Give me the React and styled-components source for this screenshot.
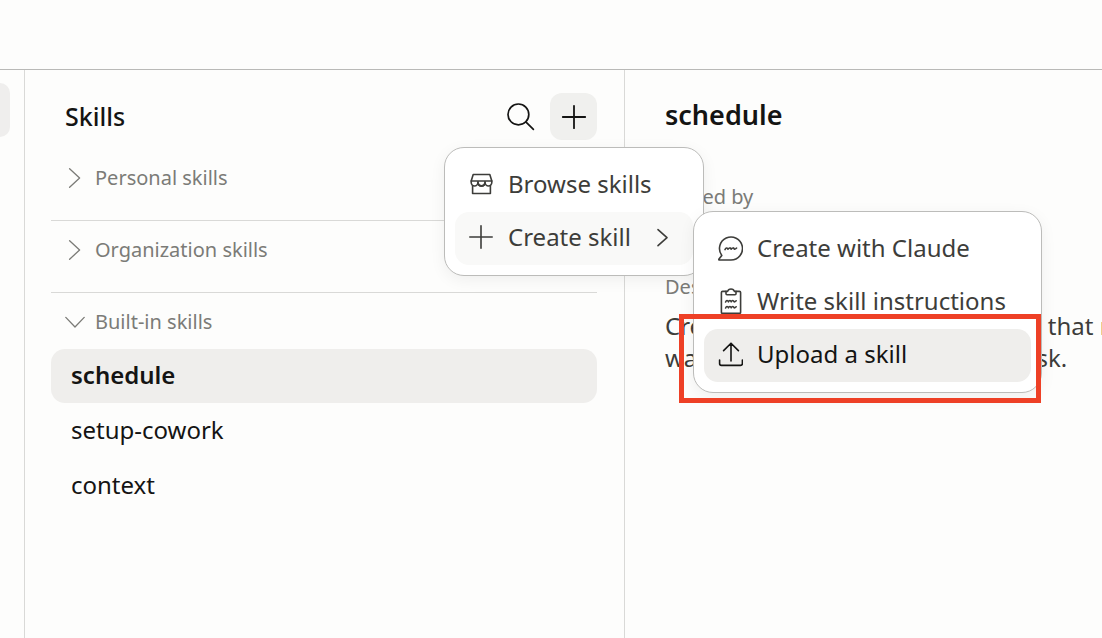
import React from 'react';
import styled, {createGlobalStyle, css} from 'styled-components';

const GlobalStyle = createGlobalStyle`
  * {
    box-sizing: border-box;
  }
  body {
    margin: 0;
    background: #fdfdfc;
    color: #141413;
    font-family: "Noto Sans", "Liberation Sans", sans-serif;
    font-size: 24px;
  }
  button {
    margin: 0;
    border: 0;
    background: none;
    color: inherit;
    font: inherit;
    text-align: left;
    cursor: pointer;
  }
`;

const Page = styled.div`
  display: flex;
  flex-direction: column;
  min-height: 100vh;
  overflow: hidden;
`;

const TopBar = styled.header`
  height: 70px;
  border-bottom: 1px solid #b9b9b7;
`;

const Columns = styled.div`
  display: flex;
  flex: 1;
`;

const Rail = styled.nav`
  flex: 0 0 25px;
  padding-top: 13px;
  border-right: 1px solid #d9d9d7;
`;

const RailItem = styled.div`
  width: 10px;
  height: 54px;
  border-radius: 0 12px 12px 0;
  background: #efeeed;
`;

const Sidebar = styled.section`
  flex: 0 0 600px;
  padding: 23px 27px 0 26px;
  border-right: 1px solid #d9d9d7;
`;

const SidebarHeader = styled.div`
  display: flex;
  align-items: center;
  padding-left: 14px;
`;

const Title = styled.h1`
  flex: 1;
  margin: 0 0 2px;
  font-size: 25px;
  font-weight: 500;
  line-height: 32px;
`;

const IconButton = styled.button`
  display: flex;
  align-items: center;
  justify-content: center;
  width: 47px;
  height: 47px;
  margin-left: 6px;
  padding: 0;
  border-radius: 12px;
  background: ${({$active}) => ($active ? '#f0f0ee' : 'transparent')};
`;

const MenuAnchor = styled.div`
  position: relative;
`;

const menuBox = css`
  position: absolute;
  z-index: 2;
  display: flex;
  flex-direction: column;
  padding: 11px 10px 10px;
  border: 1px solid #bcbcba;
  border-radius: 20px;
  background: #fff;
  box-shadow: 0 4px 16px rgba(0, 0, 0, 0.06);
`;

const Menu = styled.div`
  ${menuBox}
  top: 54px;
  right: -107px;
  width: 260px;
`;

const SubMenu = styled.div`
  ${menuBox}
  top: -1px;
  left: 100%;
  width: 349px;
`;

const MenuRow = styled.div`
  position: relative;
`;

const MenuItem = styled.button`
  display: flex;
  align-items: center;
  gap: 14px;
  width: 100%;
  height: 53px;
  padding: 0 20px 3px 13px;
  border-radius: 14px;
  background: ${({$tone}) => ($tone === 'strong' ? '#efeeec' : $tone === 'soft' ? '#f9f9f8' : 'transparent')};
  color: ${({$tone}) => ($tone === 'strong' ? '#141413' : '#3d3d3a')};
  line-height: 32px;
  white-space: nowrap;
`;

const MenuLabel = styled.span`
  flex: 1;
`;

const Marker = styled.div`
  position: absolute;
  z-index: 3;
  inset: -15px -10px -21px -25px;
  border: 5px solid #ee4026;
  pointer-events: none;
`;

const Group = styled.section`
  padding: ${({$last}) => ($last ? '14px 0 0' : '14px 0 27px')};
  border-bottom: ${({$last}) => ($last ? '0' : '1px solid #d9d9d7')};
`;

const Groups = styled.div`
  padding-top: 9px;
`;

const GroupToggle = styled.button`
  display: flex;
  align-items: center;
  gap: 10px;
  width: 100%;
  padding: 0 14px;
  color: #7b7b77;
  font-size: 20px;
  line-height: 30px;
`;

const SkillList = styled.ul`
  display: flex;
  flex-direction: column;
  gap: 1px;
  margin: 0;
  padding: 12px 0 0;
  list-style: none;
`;

const Skill = styled.button`
  display: block;
  width: 100%;
  height: 54px;
  padding: 0 20px 3px;
  border-radius: 14px;
  background: ${({$selected}) => ($selected ? '#efeeec' : 'transparent')};
  font-weight: ${({$selected}) => ($selected ? 600 : 400)};
`;

const Detail = styled.main`
  flex: 1;
  min-width: 0;
  padding: 29px 0 0 40px;
  overflow: hidden;
`;

const DetailTitle = styled.h2`
  margin: 0 0 51px;
  font-size: 27px;
  font-weight: 600;
  line-height: 32px;
`;

const Facts = styled.dl`
  margin: 0;
`;

const FactName = styled.dt`
  margin-bottom: 8px;
  color: #7b7b77;
  font-size: 20px;
  line-height: 30px;
`;

const FactValue = styled.dd`
  margin: 0 0 20px;
  color: #3d3d3a;
  line-height: 32px;
  white-space: nowrap;
`;

const Icon = ({size = 26, stroke = 1.6, children}) => (
    <svg width={size} height={size} viewBox={`0 0 ${size} ${size}`} fill="none" stroke="currentColor"
         strokeWidth={stroke} strokeLinecap="round" strokeLinejoin="round" aria-hidden="true">
        {children}
    </svg>
);

const SearchIcon = () => (
    <Icon size={28} stroke={1.7}>
        <circle cx="11.4" cy="11.4" r="10.4"/>
        <path d="M18.8 18.8 26.4 26.4"/>
    </Icon>
);

const PlusIcon = ({stroke}) => (
    <Icon stroke={stroke}>
        <path d="M13 1.8v22.4M1.8 13h22.4"/>
    </Icon>
);

const StoreIcon = () => (
    <Icon>
        <path d="M5.2 3.5h16.6L23.8 10v1.6a3.3 3.3 0 0 1-6.7 0 3.3 3.3 0 0 1-7.2 0 3.3 3.3 0 0 1-6.7 0V10z"/>
        <path d="M3.2 10h20.6M10 10v1.6a3.5 3.5 0 0 0 3.5 3.2 3.5 3.5 0 0 0 3.5-3.2V10M4.6 14.5v8h17.8v-8"/>
    </Icon>
);

const ChatIcon = () => (
    <Icon>
        <path d="M14 25A11.5 11.5 0 1 0 4.8 20.4L2 24q-.6 1 .6 1z"/>
        <path d="M8 14.6C9 12.6 10.4 12.4 11 14.2C12 12.6 13.6 12.4 14.2 14.2C15.2 12.6 16.8 12.4 17.4 14.2Q18.6 14.2 19.6 13"/>
    </Icon>
);

const ClipboardIcon = () => (
    <Icon>
        <path d="M9 3.4H5.6q-1.2 0-1.2 1.2v19.6q0 1.2 1.2 1.2h16.8q1.2 0 1.2-1.2V4.6q0-1.2-1.2-1.2H19"/>
        <path d="M9 3.4h1.6a3.5 3.1 0 0 1 6.8 0H19v2.4q0 1-1 1h-8q-1 0-1-1z"/>
        <path d="M8.6 14C9.4 12.2 10.6 12 11.4 13.8C12.2 12.2 13.6 12 14.2 13.8C15 12.2 16.4 12 17 13.8Q18 14 19.2 12.8"/>
        <path d="M8.6 20C9.4 18.2 10.6 18 11.4 19.8C12.2 18.2 13.6 18 14.2 19.8C15 18.2 16.4 18 17 19.8Q18 20 19.2 18.8"/>
    </Icon>
);

const UploadIcon = () => (
    <Icon>
        <path d="M14 20V2.2M6.6 9.6 14 2.2l7.4 7.4M2.6 19v3.6q0 1.8 1.8 1.8h19.2q1.8 0 1.8-1.8V19"/>
    </Icon>
);

const Chevron = ({open}) => (
    <Icon size={20} stroke={1.3}>
        <path d={open ? 'M.8 5.4 10 15l9.2-9.6' : 'M4.6.8 14.6 10 4.6 19.2'}/>
    </Icon>
);

const SmallChevron = () => (
    <Icon size={20} stroke={1.6}>
        <path d="M5 2.6 14 10.6 5 18.6"/>
    </Icon>
);

const skills = ['schedule', 'setup-cowork', 'context'];

const App = () => {
    return (
        <>
            <GlobalStyle/>
            <Page>
                <TopBar/>
                <Columns>
                    <Rail><RailItem/></Rail>
                    <Sidebar>
                        <SidebarHeader>
                            <Title>Skills</Title>
                            <IconButton aria-label="Search skills"><SearchIcon/></IconButton>
                            <MenuAnchor>
                                <IconButton $active aria-label="Add skill"><PlusIcon stroke={1.8}/></IconButton>
                                <Menu>
                                    <MenuItem><StoreIcon/><MenuLabel>Browse skills</MenuLabel></MenuItem>
                                    <MenuRow>
                                        <MenuItem $tone="soft">
                                            <PlusIcon/>
                                            <MenuLabel>Create skill</MenuLabel>
                                            <SmallChevron/>
                                        </MenuItem>
                                        <SubMenu>
                                            <MenuItem><ChatIcon/><MenuLabel>Create with Claude</MenuLabel></MenuItem>
                                            <MenuItem><ClipboardIcon/><MenuLabel>Write skill instructions</MenuLabel></MenuItem>
                                            <MenuRow>
                                                <MenuItem $tone="strong"><UploadIcon/><MenuLabel>Upload a skill</MenuLabel></MenuItem>
                                                <Marker/>
                                            </MenuRow>
                                        </SubMenu>
                                    </MenuRow>
                                </Menu>
                            </MenuAnchor>
                        </SidebarHeader>
                        <Groups>
                            <Group>
                                <GroupToggle aria-expanded="false"><Chevron/>Personal skills</GroupToggle>
                            </Group>
                            <Group>
                                <GroupToggle aria-expanded="false"><Chevron/>Organization skills</GroupToggle>
                            </Group>
                            <Group $last>
                                <GroupToggle aria-expanded="true"><Chevron open/>Built-in skills</GroupToggle>
                                <SkillList>
                                    {skills.map((name) => (
                                        <li key={name}>
                                            <Skill $selected={name === 'schedule'}>{name}</Skill>
                                        </li>
                                    ))}
                                </SkillList>
                            </Group>
                        </Groups>
                    </Sidebar>
                    <Detail>
                        <DetailTitle>schedule</DetailTitle>
                        <Facts>
                            <FactName>Added by</FactName>
                            <FactValue>Anthropic</FactValue>
                            <FactName>Description</FactName>
                            <FactValue>
                                Create or update scheduled tasks that run<br/>
                                wants to set up their recurring task.
                            </FactValue>
                        </Facts>
                    </Detail>
                </Columns>
            </Page>
        </>
    );
};

export default App;
